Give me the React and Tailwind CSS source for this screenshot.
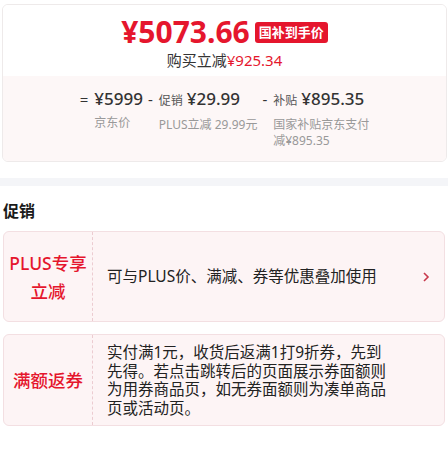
import React from "react";

const red = "text-[#e5162d]";

const PriceItem = ({ op, label, price, sub, subWidth }) => (
    <div className="flex items-start gap-[6px]">
        <span className="text-[15px] leading-[22px] text-[#333]">{op}</span>
        <div className="flex flex-col">
            <div className="flex items-baseline gap-[4px] leading-[22px]">
                {label && <span className="text-[12px] text-[#555]">{label}</span>}
                <span className="text-[17px] font-medium text-[#333]">{price}</span>
            </div>
            <div className={`mt-[5px] text-[12px] leading-[16px] text-[#999] ${subWidth || ""}`}>{sub}</div>
        </div>
    </div>
);

const PromoCard = ({ title, children, arrow }) => (
    <div className="flex rounded-[6px] border border-[#f3dfe2] bg-[#fdf4f5]">
        <div className="flex w-[89px] shrink-0 items-center justify-center border-r border-dashed border-[#ecccd1] text-center">
            <span className={`text-[17.5px] leading-[28px] font-medium ${red}`}>{title}</span>
        </div>
        <div className="flex flex-1 items-center py-[10px] pl-[14px] pr-[12px]">
            <div className="flex-1 text-[15.5px] leading-[18.5px] text-[#222]">{children}</div>
            {arrow && (
                <svg width="8" height="12" viewBox="0 0 8 12" className="mr-[2px]">
                    <path d="M2 2l4 4-4 4" fill="none" stroke="#c8384c" strokeWidth="1.6" />
                </svg>
            )}
        </div>
    </div>
);

const App = () => {
    return (
        <div className="h-[458px] w-[448px] bg-white" style={{ fontFamily: '"Noto Sans", "Noto Sans CJK SC", sans-serif' }}>
            <div className="pt-[4px] pl-[2px] pr-[1px]">
                <div className="overflow-hidden rounded-[6px] border border-[#eeeaea]">
                    {/* 到手价 */}
                    <div className="flex flex-col items-center bg-white pt-[9px] pb-[5px]">
                        <div className="flex h-[36px] items-center gap-[5px]">
                            <span className={`text-[30px] leading-[36px] font-bold ${red}`}>¥5073.66</span>
                            <span className="rounded-[3px] bg-[#e5162d] px-[4px] text-[13px] leading-[21px] font-bold text-white">国补到手价</span>
                        </div>
                        <div className="text-[15px] leading-[21px] text-[#333]">
                            购买立减<span className={red}>¥925.34</span>
                        </div>
                    </div>
                    {/* 价格明细 */}
                    <div className="flex justify-center gap-[5px] bg-[#fdf7f7] pt-[12px] pb-[12px]">
                        <PriceItem op="=" price="¥5999" sub="京东价" />
                        <PriceItem op="-" label="促销" price="¥29.99" sub="PLUS立减 29.99元" />
                        <PriceItem op="-" label="补贴" price="¥895.35" sub="国家补贴京东支付减¥895.35" subWidth="w-[96px]" />
                    </div>
                </div>
            </div>
            <div className="mt-[16px] h-[8px] bg-[#f4f5f8]" />
            <div className="px-[3px] pt-[14px]">
                <h3 className="text-[16px] leading-[22px] font-bold text-[#1a1a1a]">促销</h3>
                <div className="mt-[9px] flex flex-col gap-[12px]">
                    <div className="h-[91px] [&>div]:h-full">
                        <PromoCard title={<>PLUS专享<br />立减</>} arrow>
                            可与PLUS价、满减、券等优惠叠加使用
                        </PromoCard>
                    </div>
                    <div className="h-[92px] [&>div]:h-full">
                        <PromoCard title="满额返券">
                            实付满1元，收货后返满1打9折券，先到<br />
                            先得。若点击跳转后的页面展示券面额则<br />
                            为用券商品页，如无券面额则为凑单商品<br />
                            页或活动页。
                        </PromoCard>
                    </div>
                </div>
            </div>
        </div>
    );
};

export default App;
